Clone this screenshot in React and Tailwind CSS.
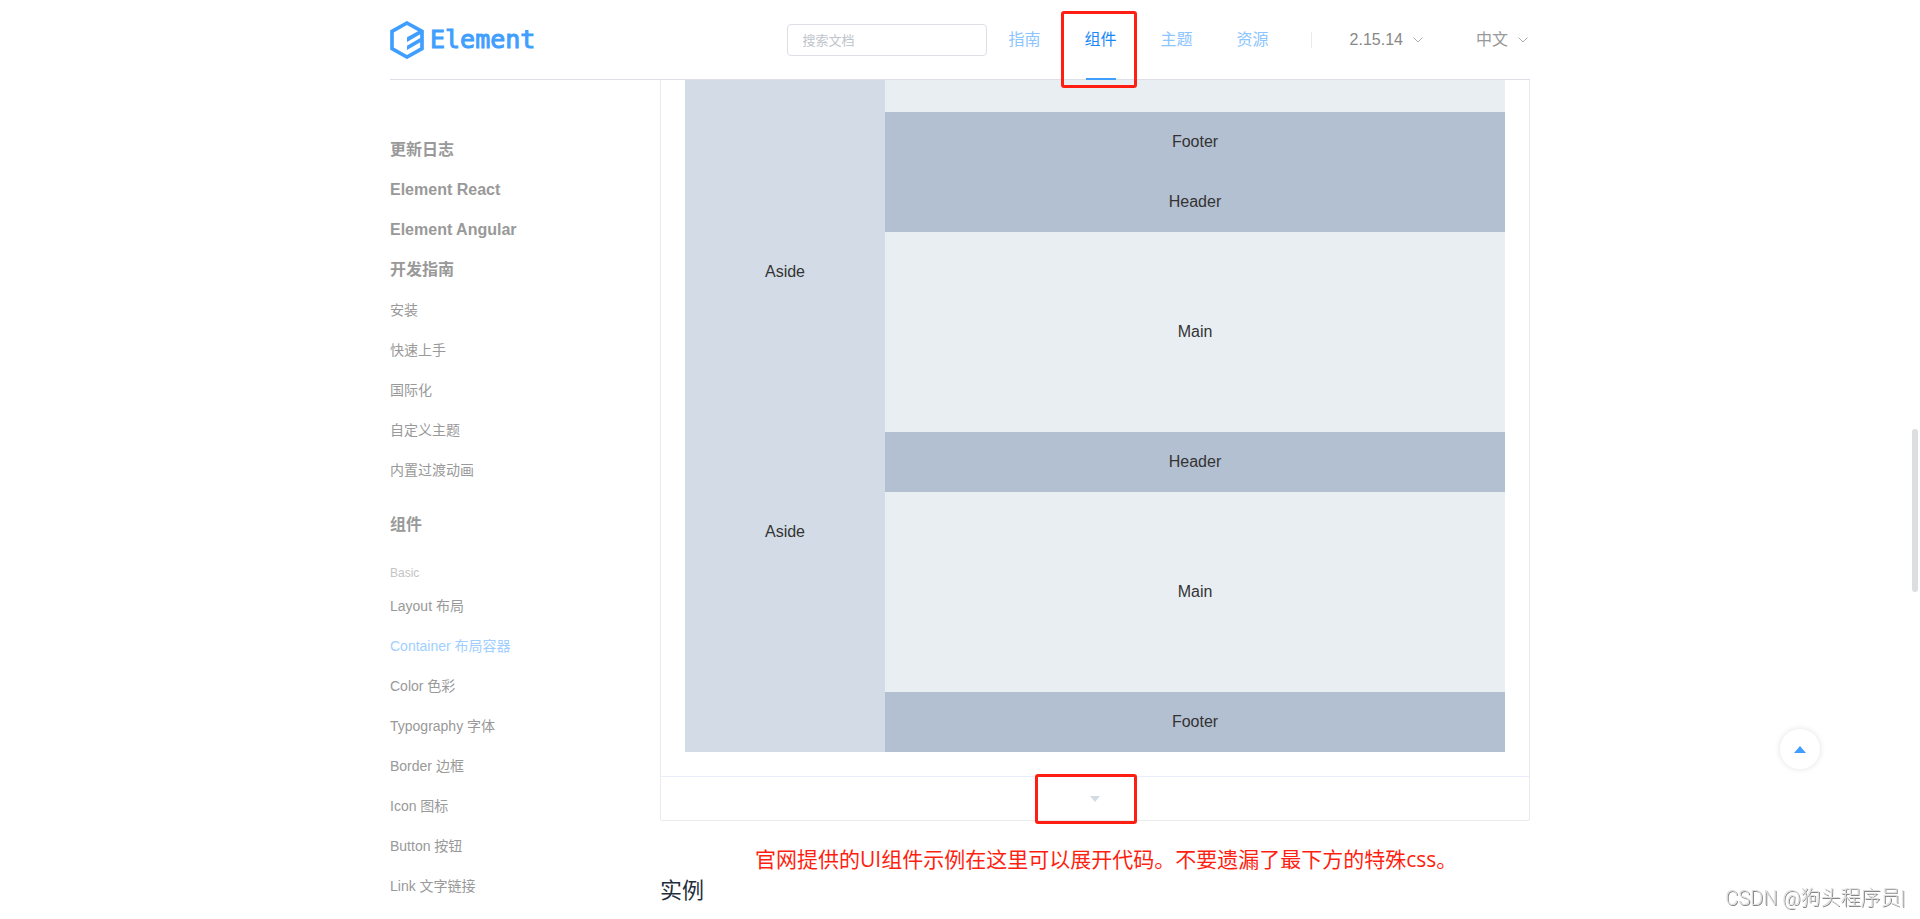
import { useState } from "react";

const navItems = [
  { label: "指南" },
  { label: "组件", active: true },
  { label: "主题" },
  { label: "资源" },
];

const guideGroups = ["更新日志", "Element React", "Element Angular", "开发指南"];
const guideItems = ["安装", "快速上手", "国际化", "自定义主题", "内置过渡动画"];

const basicItems = [
  "Layout 布局",
  "Container 布局容器",
  "Color 色彩",
  "Typography 字体",
  "Border 边框",
  "Icon 图标",
  "Button 按钮",
  "Link 文字链接",
];

const Logo = () => (
  <a href="#" className="flex items-center gap-1.5 text-[#409eff]">
    <svg width="34" height="38" viewBox="0 0 102 114" fill="none">
      <path
        d="M51 6 L96 31 V83 L51 108 L6 83 V31 Z"
        stroke="currentColor"
        strokeWidth="11"
      />
      <path
        d="M51 49 L96 24 V37 L51 63 Z M51 74 L96 48 V61 L51 87 Z"
        fill="currentColor"
      />
    </svg>
    <span className="font-['DejaVu_Sans_Mono',monospace] text-[25px] leading-8 [-webkit-text-stroke:1px_#409eff]">
      Element
    </span>
  </a>
);

const Chevron = () => (
  <svg width="10" height="6" viewBox="0 0 10 6" fill="none" stroke="#999">
    <path d="M0.5 0.5 L5 5 L9.5 0.5" strokeWidth="0.8" />
  </svg>
);

const Header = () => (
  <header className="flex h-20 items-center border-b border-[#dcdfe6] pt-px pr-0.5">
    <Logo />
    <input
      type="text"
      aria-label="搜索文档"
      placeholder="搜索文档"
      className="ml-auto h-8 w-50 rounded-sm border border-[#dcdfe6] bg-white px-[15px] text-[13px] outline-none placeholder:text-[#c0c4cc]"
    />
    <nav className="flex h-20">
      {navItems.map((item) => (
        <a
          key={item.label}
          href="#"
          className={`relative flex h-20 items-center px-[22px] text-base ${
            item.active ? "text-[#1989fa]" : "text-[#8cc5ff]"
          }`}
        >
          {item.label}
          {item.active && (
            <>
              <span className="absolute bottom-0 left-1/2 z-10 -ml-[15px] h-0.5 w-[30px] bg-[#409eff]" />
              <span className="absolute -bottom-2 -left-0.5 z-10 h-[77px] w-[76px] rounded-[3px] border-3 border-[#ff1f12]" />
            </>
          )}
        </a>
      ))}
    </nav>
    <span className="ml-5 h-4 w-px bg-[#ebebeb]" />
    <button className="ml-[38px] flex items-center gap-[10px] text-base text-[#888]">
      2.15.14
      <Chevron />
    </button>
    <button className="ml-[53px] flex items-center gap-[10px] text-base text-[#999]">
      中文
      <Chevron />
    </button>
  </header>
);

const Sidebar = () => (
  <aside className="w-[270px] shrink-0 pt-[50px] text-sm leading-10 text-[#999]">
    <ul>
      {guideGroups.map((name) => (
        <li key={name}>
          <a href="#" className="block text-base leading-10 font-bold">
            {name}
          </a>
        </li>
      ))}
      {guideItems.map((name) => (
        <li key={name}>
          <a href="#" className="block">
            {name}
          </a>
        </li>
      ))}
    </ul>
    <p className="mt-[15px] text-base leading-10 font-bold">组件</p>
    <p className="mt-[15px] text-xs leading-[26px] text-[#c4c4c4]">Basic</p>
    <ul>
      {basicItems.map((name) => (
        <li key={name}>
          <a
            href="#"
            className={
              name.startsWith("Container") ? "block text-[#a0cfff]" : "block"
            }
          >
            {name}
          </a>
        </li>
      ))}
    </ul>
  </aside>
);

const HeaderBlock = ({ children }) => (
  <div className="h-15 bg-[#b3c0d1] leading-15">{children}</div>
);

const MainBlock = () => (
  <div className="h-50 bg-[#e9eef3] leading-50">Main</div>
);

const AsideBlock = ({ children }) => (
  <div className="w-50 shrink-0 bg-[#d3dce6] leading-50">{children}</div>
);

const DemoBlock = () => {
  const [open, setOpen] = useState(false);

  return (
    <section className="rounded-b-[3px] border border-t-0 border-[#ebebeb]">
      <div className="px-6 pb-6 text-center text-base text-[#333]">
        <div className="flex">
          <AsideBlock />
          <div className="flex-1">
            <div className="h-8 bg-[#e9eef3]" />
            <HeaderBlock>Footer</HeaderBlock>
          </div>
        </div>
        <div className="flex">
          <AsideBlock>Aside</AsideBlock>
          <div className="flex-1">
            <HeaderBlock>Header</HeaderBlock>
            <MainBlock />
          </div>
        </div>
        <div className="flex">
          <AsideBlock>Aside</AsideBlock>
          <div className="flex-1">
            <HeaderBlock>Header</HeaderBlock>
            <MainBlock />
            <HeaderBlock>Footer</HeaderBlock>
          </div>
        </div>
      </div>
      <button
        aria-label="展开代码"
        aria-expanded={open}
        onClick={() => setOpen(!open)}
        className="relative flex h-11 w-full items-center justify-center border-t border-[#eaeefb]"
      >
        <svg width="10" height="6" viewBox="0 0 10 6" fill="#d3dce6">
          <path d="M0 0 H10 L5 6 Z" />
        </svg>
        <span className="absolute -top-[3px] left-1/2 -ml-[60px] h-[50px] w-[102px] rounded-[3px] border-3 border-[#ff1f12]" />
      </button>
    </section>
  );
};

const BackTop = () => (
  <button
    aria-label="回到顶部"
    className="fixed right-[100px] bottom-[150px] flex size-10 items-center justify-center rounded-full bg-white shadow-[0_0_6px_rgba(0,0,0,0.12)]"
  >
    <svg width="12" height="7" viewBox="0 0 12 7" fill="#409eff">
      <path d="M0 7 L6 0 L12 7 Z" />
    </svg>
  </button>
);

const App = () => (
  <div className="relative h-screen overflow-hidden bg-white font-['Liberation_Sans','Noto_Sans_CJK_SC',sans-serif]">
    <div className="mx-auto max-w-[1140px]">
      <Header />
      <div className="flex">
        <Sidebar />
        <main className="min-w-0 flex-1">
          <DemoBlock />
          <p className="mt-[22px] pl-[95px] font-['Open_Sans','Noto_Sans_CJK_SC',sans-serif] text-[21px] leading-8 text-[#ff1f12]">
            官网提供的UI组件示例在这里可以展开代码。不要遗漏了最下方的特殊css。
          </p>
          <h3 className="text-[22px] leading-8 text-[#1f2f3d]">实例</h3>
        </main>
      </div>
    </div>
    <BackTop />
    <div className="fixed top-[429px] right-0.5 h-[163px] w-1.5 rounded-full bg-[#dddee0]" />
    <div className="fixed right-[15px] bottom-1.5 font-['Roboto','Noto_Sans_CJK_SC',sans-serif] text-xl leading-[30px] font-light text-[#ddd] [text-shadow:1px_1px_0_#888]">
      CSDN @狗头程序员|
    </div>
  </div>
);

export default App;
